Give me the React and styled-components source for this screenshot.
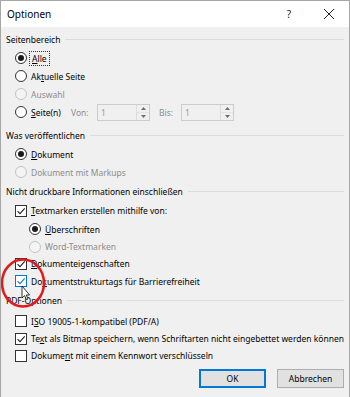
import React from 'react';
import styled, { createGlobalStyle } from 'styled-components';

const Global = createGlobalStyle`
  html, body {
    margin: 0;
    padding: 0;
    background: #f0f0f0;
  }
  body {
    font-family: "Segoe UI", "Noto Sans", sans-serif;
    font-size: 8.5px;
    color: #000;
  }
`;

const Dialog = styled.div`
  position: relative;
  box-sizing: border-box;
  width: 350px;
  height: 397px;
  border: 1px solid #a6a6a6;
  border-bottom: none;
  background: #f0f0f0;
  display: flex;
  flex-direction: column;
  overflow: hidden;
`;

const TitleBar = styled.div`
  height: 26px;
  flex: none;
  background: #fff;
  display: flex;
  align-items: center;
  padding-left: 6px;
  font-size: 10px;
`;

const Title = styled.div`
  flex: 1;
`;

const TitleBtn = styled.div`
  width: 40px;
  display: flex;
  align-items: center;
  justify-content: center;
  font-size: 10px;
  color: #222;
`;

const Content = styled.div`
  display: flex;
  flex-direction: column;
  padding: 2px 5px 0 5px;
`;

const Header = styled.div`
  height: 20px;
  margin-top: ${p => p.mt || 0}px;
  display: flex;
  align-items: center;
  gap: 5px;
  &::after {
    content: '';
    flex: 1;
    height: 1px;
    background: #dcdcdc;
  }
`;

const Row = styled.div`
  height: ${p => p.h || 18}px;
  margin-top: ${p => p.mt || 0}px;
  display: flex;
  align-items: center;
  gap: 4px;
  padding-left: ${p => p.indent || 9}px;
  color: ${p => (p.disabled ? '#8d8d8d' : '#000')};
`;

const Radio = styled.span`
  box-sizing: border-box;
  width: 12px;
  height: 12px;
  flex: none;
  border-radius: 50%;
  border: 1px solid ${p => (p.disabled ? '#c4c4c4' : '#333')};
  background: ${p => (p.disabled ? '#f4f4f4' : '#fff')};
  display: flex;
  align-items: center;
  justify-content: center;
  &::after {
    content: '';
    display: ${p => (p.checked ? 'block' : 'none')};
    width: 6px;
    height: 6px;
    border-radius: 50%;
    background: #1a1a1a;
  }
`;

const Box = styled.span`
  box-sizing: border-box;
  width: 12px;
  height: 12px;
  flex: none;
  border: 1px solid ${p => (p.hover ? '#0078d7' : '#333')};
  background: #fff;
  display: flex;
  align-items: center;
  justify-content: center;
`;

const Label = styled.span`
  width: ${p => (p.w ? `${p.w}px` : 'auto')};
  white-space: nowrap;
  ${p => p.focus && `
    outline: 1px dotted #333;
    outline-offset: 1px;
    padding: 0 1px;
  `}
  u {
    text-decoration-thickness: 1px;
    text-underline-offset: 1px;
  }
`;

const FieldLabel = styled.span`
  color: #8d8d8d;
  width: ${p => p.w}px;
  margin-left: ${p => p.ml || 0}px;
`;

const Spin = styled.div`
  box-sizing: border-box;
  width: 53px;
  height: 17px;
  border: 1px solid #cccccc;
  background: #f0f0f0;
  display: flex;
  color: #9a9a9a;
`;

const SpinValue = styled.div`
  flex: 1;
  display: flex;
  align-items: center;
  padding-left: 3px;
`;

const SpinArrows = styled.div`
  width: 12px;
  display: flex;
  flex-direction: column;
  border-left: 1px solid #dcdcdc;
`;

const Arrow = styled.div`
  flex: 1;
  display: flex;
  align-items: center;
  justify-content: center;
  & + & {
    border-top: 1px solid #e4e4e4;
  }
`;

const Buttons = styled.div`
  display: flex;
  justify-content: flex-end;
  gap: 11px;
  margin-top: 5px;
  padding-right: 0;
`;

const Button = styled.div`
  box-sizing: border-box;
  width: 67px;
  height: 19px;
  background: #e1e1e1;
  border: ${p => (p.primary ? '2px solid #0078d7' : '1px solid #adadad')};
  display: flex;
  align-items: center;
  justify-content: center;
`;

const Overlay = styled.svg`
  position: absolute;
  left: 0;
  top: 256px;
  pointer-events: none;
`;

const Check = ({ color = '#222' }) => (
  <svg width="10" height="10" viewBox="0 0 10 10">
    <path d="M1.5 5.2 L4 7.6 L8.7 2.4" fill="none" stroke={color} strokeWidth="1.1" />
  </svg>
);

const Tri = ({ up }) => (
  <svg width="5" height="3" viewBox="0 0 5 3">
    <path d={up ? 'M0 3 L2.5 0 L5 3 Z' : 'M0 0 L2.5 3 L5 0 Z'} fill="#6e6e6e" />
  </svg>
);

const SpinBox = () => (
  <Spin>
    <SpinValue>1</SpinValue>
    <SpinArrows>
      <Arrow><Tri up /></Arrow>
      <Arrow><Tri /></Arrow>
    </SpinArrows>
  </Spin>
);

export default function App() {
  return (
    <>
      <Global />
      <Dialog>
        <TitleBar>
          <Title>Optionen</Title>
          <TitleBtn>?</TitleBtn>
          <TitleBtn>
            <svg width="12" height="12" viewBox="0 0 12 12">
              <path d="M1 1 L11 11 M11 1 L1 11" stroke="#222" strokeWidth="1" />
            </svg>
          </TitleBtn>
        </TitleBar>
        <Content>
          <Header>Seitenbereich</Header>
          <Row>
            <Radio checked />
            <Label focus><u>A</u>lle</Label>
          </Row>
          <Row>
            <Radio />
            <Label>Ak<u>t</u>uelle Seite</Label>
          </Row>
          <Row disabled>
            <Radio disabled />
            <Label>Auswahl</Label>
          </Row>
          <Row>
            <Radio />
            <Label w={36}><u>S</u>eite(n)</Label>
            <FieldLabel w={22}>Von:</FieldLabel>
            <SpinBox />
            <FieldLabel w={18} ml={5}>Bis:</FieldLabel>
            <SpinBox />
          </Row>
          <Header mt={4}>Was veröffentlichen</Header>
          <Row>
            <Radio checked />
            <Label><u>D</u>okument</Label>
          </Row>
          <Row disabled>
            <Radio disabled />
            <Label>Dokument mit Markups</Label>
          </Row>
          <Header>Nicht druckbare Informationen einschließen</Header>
          <Row h={19}>
            <Box><Check /></Box>
            <Label><u>T</u>extmarken erstellen mithilfe von:</Label>
          </Row>
          <Row indent={23}>
            <Radio checked />
            <Label><u>Ü</u>berschriften</Label>
          </Row>
          <Row indent={23} h={17} disabled>
            <Radio disabled />
            <Label>Word-Textmarken</Label>
          </Row>
          <Row h={17}>
            <Box><Check /></Box>
            <Label><u>D</u>okumenteigenschaften</Label>
          </Row>
          <Row>
            <Box hover><Check color="#2a6fb8" /></Box>
            <Label>Do<u>k</u>umentstrukturtags für Barrierefreiheit</Label>
          </Row>
          <Header>PDF-Optionen</Header>
          <Row mt={2}>
            <Box />
            <Label>I<u>S</u>O 19005-1-kompatibel (PDF/A)</Label>
          </Row>
          <Row h={17}>
            <Box><Check /></Box>
            <Label>Te<u>x</u>t als Bitmap speichern, wenn Schriftarten nicht eingebettet werden können</Label>
          </Row>
          <Row h={17}>
            <Box />
            <Label>Dokume<u>n</u>t mit einem Kennwort verschlüsseln</Label>
          </Row>
          <Buttons>
            <Button primary>OK</Button>
            <Button>Abbrechen</Button>
          </Buttons>
        </Content>
        <Overlay width="60" height="60" viewBox="0 0 60 60">
          <ellipse cx="22" cy="26" rx="21" ry="23.5" fill="none" stroke="#e3191b" strokeWidth="2.5" />
          <path
            d="M21 29 L21 41 L23.6 38.6 L25.4 42.6 L27 41.9 L25.3 38 L28.6 38 Z"
            fill="#fff"
            stroke="#000"
            strokeWidth="0.8"
            strokeLinejoin="round"
          />
        </Overlay>
      </Dialog>
    </>
  );
}
